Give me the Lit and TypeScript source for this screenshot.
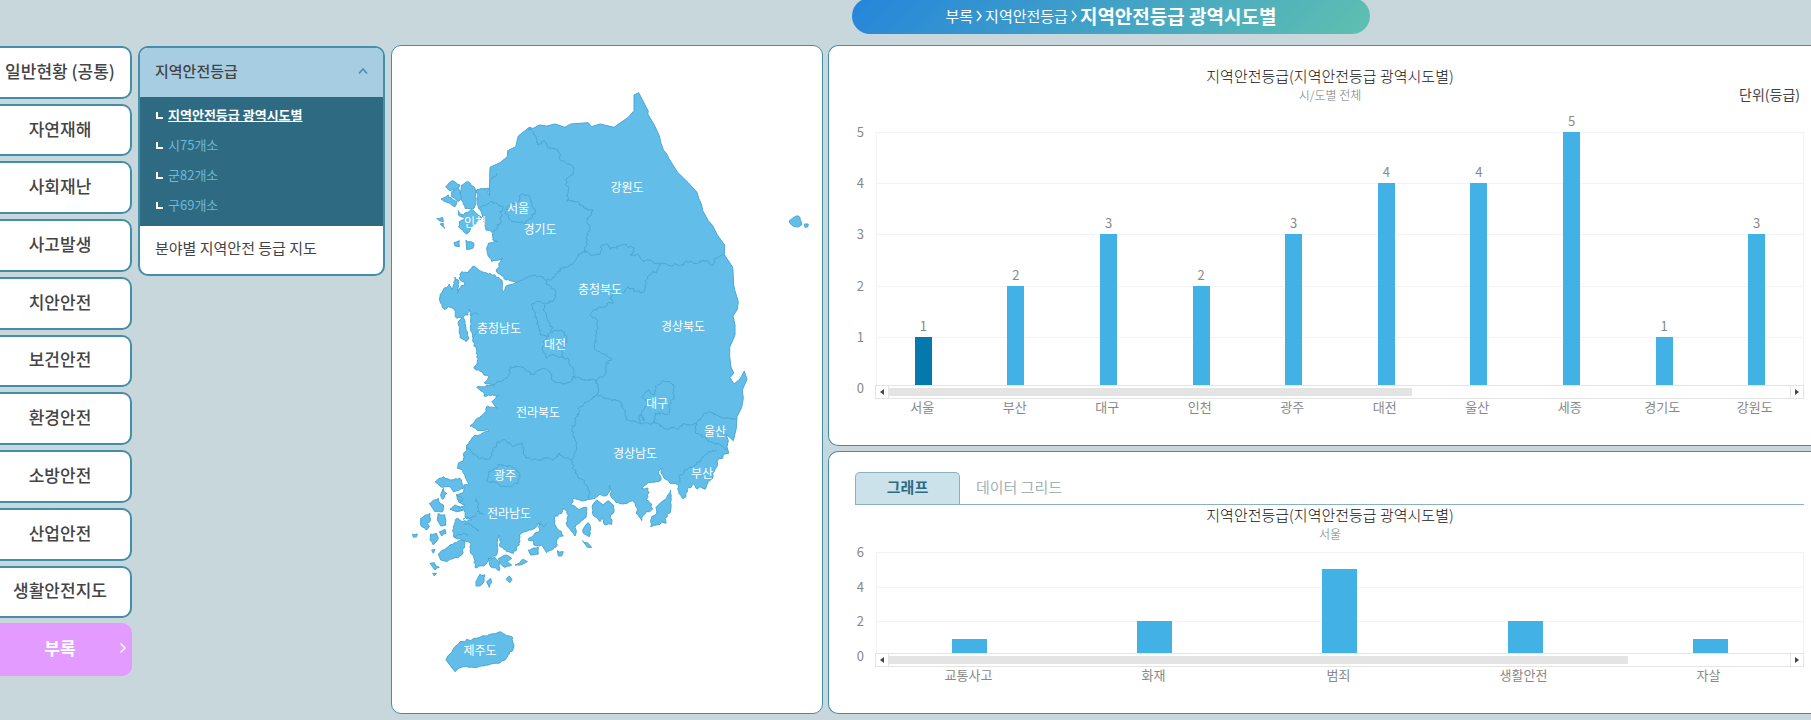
import { LitElement, html, svg, css } from "lit";
import { customElement, property, state } from "lit/decorators.js";
import { classMap } from "lit/directives/class-map.js";

type Datum = { name: string; value: number; active?: boolean };

const FONT = css`"Noto Sans CJK KR", "Noto Sans", sans-serif`;

/* Map tiles: each one holds outlines in thirds of a map unit, relative to its own origin. */
const TILE = {
  northWest: "translate(400 80) scale(0.33333)",
  northEast: "translate(560 80) scale(0.33333)",
  west: "translate(400 280) scale(0.33333)",
  east: "translate(560 280) scale(0.33333)",
  south: "translate(400 430) scale(0.33333)",
};

const parse = (s: string): number[][] => s.trim().split(/\s+/).map((p) => p.split(",").map(Number));

/* Breaks straight runs into short uneven steps, the same way on every render. */
function rough(s: string, step: number, amp: number): string {
  const pts = parse(s);
  const out: string[] = [];
  let seed = 7;
  const rnd = () => {
    seed = (seed * 16807) % 2147483647;
    return seed / 2147483647 - 0.5;
  };
  pts.forEach(([x, y], i) => {
    out.push(`${x},${y}`);
    const next = pts[i + 1];
    if (!next) return;
    const n = Math.floor(Math.hypot(next[0] - x, next[1] - y) / step);
    for (let k = 1; k < n; k++) {
      const px = x + ((next[0] - x) * k) / n + rnd() * amp;
      const py = y + ((next[1] - y) * k) / n + rnd() * amp;
      out.push(`${px.toFixed(1)},${py.toFixed(1)}`);
    }
  });
  return out.join(" ");
}

const EAST_COAST = `634,95 638.7,92.7 648.3,111.3 647.7,114 654.3,125 659.3,135.7 661,143.3 663.7,150.7 666,152.7 669,158.7
677.3,172 688.3,182.7 697,192.3 698.7,198.3 701.7,205 702.7,210.7 708.3,220.7 712.7,225.7 717.3,235 724.7,245 724.3,254.3
726.7,258.3 732.7,267.3 733.3,276.7 733.5,284 734.7,290 738.3,301.7 737.3,309.3 733,316 735,325 735,335 729.7,347.3
729.7,356.7 731,367.3 733.7,373 730,377.7 734,384 740,379 744.3,371 747,379.3 742.3,390 743.3,398.3 741.7,407.3 737,416.7
736.3,428.3 733.3,440.7 726,434 728.3,440.7 727,446.7 728.7,453.3 723.3,454.3 722.7,458.3 718.7,458.7`;

const SOUTH_WEST_COAST = `718.7,458.7 716.7,466.7 712.7,473.3 712.7,478.3 708.3,481.7 705,489.3 700,486.7 697.3,489 693.3,484
687.3,489.3 686,496.7 682.7,498.7 678.7,493.3 678.3,485 670,483.3 668,480 664,478 661,473 661.7,468.3 658.3,471.7 661,480
656.7,481.7 648.3,482.7 641.7,488.3 648,488 649,493 646,500 651.7,504 651.7,510 646,511.7 641.7,520.7 636,513.3 637.3,508.3
635,503.3 632.7,500.7 626,503.3 618.3,502.7 611.7,498 610,485 608.3,493.3 603.3,496 600,494 595,498.3 590,499.3 581.7,501
572.7,498.3 570.7,505 580,509.3 586.7,507.3 586,517.3 580,522.7 576,525 575,536 570.7,530 566.7,525 568.3,515 564,508
561.7,513.3 555,516 555,525 563.3,536 556.7,540 557.3,545 546.7,552.7 541.7,545 534,545 533.3,540 528,540 535,533 540,530
538,523 535,528.3 525,531.7 519.3,535 519.3,545 513.3,553.3 506.7,551.7 500,546.7 499.3,535 497.3,545 496.7,555 489.3,558.3
483.3,566 475,567.3 474,558.3 470.7,553.3 470.7,543.3 465,540.7 453.3,536.7 453.3,526.7 457.3,518.3 463,521.7 471.7,520
465,517.3 463.3,508.3 455,508 465,505 458.3,501.7 457,495 462.7,493 464,485 469.3,485 465,476.7 462.7,470 457.3,468.3
458.3,463.3 463.3,460.7 464,452.7 466.7,450.7 466.7,445 473.3,436.7 488.3,431.7 488.3,430 480,430.7 470,426 477.3,418.3
486,411.7 487.3,406 497.3,408.3 491.7,401.7 498.3,395 484,396 482.7,391.7 476.7,387.3 495,385 484,382.7 489.3,376.7
474,368.3 477.3,361.7 476.7,351.7 472.7,340 470.7,326 470.7,313.3 469,309 468,315 463.3,316.7 456.7,318.3 453.3,308.3
448.3,306.7 444,309.3 440.7,303.3 440,297 443.3,290 449.3,284 452,290 455,277 458.3,280 457.3,293.3 461,286 465,285
459,278 461.7,271.7 468.3,272.7 474,266 480,270.7 488.3,274 495,275 501.7,280 503.3,291.7 508.3,285 517.3,282.7 511,281
506,280 500,274 496,270 503,258 491.7,261.7 487.3,253.3 488.3,243.3 498,241.7 492.7,240 491.7,231.7 486,230 485,223
481.7,213 478.3,208 476.7,190 488.3,188 489.3,196`;

const NORTH_LINE = `489.3,196 490,167.3 500,162.7 507.3,156.7 507.7,150.7 515.7,146.7 518.3,136 529.3,127.3 533,128.5 539.3,125
546.7,126 555,124 565,127.3 570.7,124 588.3,122.7 591.7,126.7 600,124 614,127.3 628.3,117.3 634,110.7`;

const ISLANDS: [string, string[]][] = [
  [TILE.northWest, [
    "185,315 205,305 225,325 228,365 222,385 195,385 180,350",
    "137,320 158,302 180,315 170,330 148,332",
    "155,335 175,325 185,350 175,365 155,350",
    "123,357 135,352 145,345 160,360 170,365 165,380 150,370 135,365",
    "175,392 190,405 215,388 235,405 245,412 235,425 215,440 200,462 175,440 178,425 195,418 175,405",
    "110,415 128,412 130,425 118,422",
    "120,432 130,430 135,445",
    "162,487 178,482 178,500 165,498",
    "198,480 222,490 218,505 200,508",
  ]],
  [TILE.northEast, [
    "688,422 700,413 712,407 720,412 725,435 712,441 700,439 690,430",
    "733,432 745,432 743,441 735,442",
  ]],
  [TILE.west, ["185,115 175,125 178,150 180,172 198,185 207,175 198,150 195,130 190,112"]],
  [TILE.south, [
    "105,155 130,140 150,150 180,145 190,175 160,185 150,170 125,172",
    "130,175 140,190 128,208 122,195",
    "88,220 115,205 120,220 130,225 128,245 105,245",
    "115,250 135,255 138,285 122,288 112,270",
    "62,265 90,250 90,275 82,280 88,290 78,300 62,285",
    "92,312 110,310 115,325 100,345 90,330",
    "115,372 150,345 185,330 195,335 185,375 140,395 122,390",
    "38,312 52,312 50,320 40,322",
    "118,305 135,298 138,310 125,318",
    "170,192 188,205 185,215 172,208",
    "150,238 165,225 190,240 170,245",
    "95,360 105,358 100,370",
    "90,400 103,398 118,412 105,420",
    "98,430 110,430 103,438",
    "240,432 255,435 252,455 240,468 228,468 228,455",
    "260,455 272,445 275,458 268,472",
    "318,448 328,438 336,448 330,458",
    "265,385 285,382 298,400 298,422 270,408",
    "295,385 320,375 335,385 320,395 335,405 315,412 300,400",
    "345,405 360,398 370,388 382,395 360,405",
    "385,360 415,352 415,372 392,375",
    "472,362 490,365 485,378 475,378",
    "548,300 565,278 572,295 568,320 550,310",
    "548,332 562,338 575,352 562,352",
    "590,210 578,225 577,250 600,275 605,265 615,285 635,283 632,255 640,250 640,225 625,212 610,225",
    "785,215 800,205 812,180 812,240 795,265 798,280 785,276 770,285 752,290 755,260 770,250 768,232",
    "138,690 150,672 165,650 180,635 195,636 200,628 212,632 222,625 240,622 275,612 302,605 320,617 338,622 340,655 315,690 290,700 265,705 228,712 190,710 178,714 165,725",
  ]],
];

const BORDERS: [string, string[]][] = [
  [TILE.northWest, [
    "388,142 405,165 412,195 432,182 445,205 475,208 480,238 518,260 520,280 498,300 505,335 500,365 525,365 550,378 580,390 575,405 560,415 568,435 560,470 558,500 550,515",
    "550,515 535,525 515,555 480,565 465,590 440,602 415,588 395,588 375,595 352,605",
    "440,602 445,615 465,630 465,655 440,670 410,665",
    "325,375 355,365 360,345 385,345 395,375 405,390 395,415 370,430 335,425 315,400 325,375",
    "240,385 270,365 310,380 300,395 305,410 290,450 278,455",
    "272,300 285,290 290,280",
  ]],
  [TILE.northEast, [
    "75,510 90,525 120,522 125,495 140,490 150,508 190,495 225,505 210,525 235,525 245,540 295,548 335,560 345,550 365,555 380,542 415,550 430,540 460,557 465,535 492,523",
  ]],
  [TILE.west, [
    "410,65 395,75 405,105 415,140 420,165 445,170 455,150 440,110 430,90 435,75",
    "455,155 485,150 500,175 485,215 490,232 455,225 440,235 428,210 430,185 445,165",
    "285,312 325,290 330,260 370,262 392,285 430,265 450,275 455,300 490,315 525,290 515,260 505,235 490,230",
    "525,290 555,300 590,300",
    "200,500 215,515 235,535 265,538 290,490 315,480 340,500 365,488 372,525 395,540 430,535 460,540 480,520 515,540",
    "265,605 265,575 290,565 295,552 335,560 360,580 355,605 335,620 300,618 280,605 265,605",
    "210,105 222,100 236,103",
    "222,170 228,160 240,152",
  ]],
  [TILE.east, [
    "110,300 135,285 138,250 155,235 125,220 102,205 110,160 110,120 90,105 120,80 160,70 150,55 160,40 195,35 205,20 240,38 255,25 258,0 262,-10 290,-30 300,-52",
    "110,300 115,325 110,345 140,355 180,365 195,400 200,420 240,430 275,430 285,425 300,440 350,448 375,430 410,432",
    "110,345 60,380 45,425 35,455 50,490 45,515 35,540 45,580 70,600 85,630 88,655",
    "285,430 285,400 325,403 328,375 342,350 340,312 310,302 285,320 285,345 265,330 245,350 265,365 245,395 255,420 240,405 240,430",
    "410,432 430,402 455,397 490,415 530,417",
    "410,432 405,455 450,485 480,495 500,510",
    "470,510 445,515 410,550 385,565 360,585 360,608",
  ]],
  [TILE.south, [
    "230,205 235,225 232,245 250,255",
    "190,265 215,262 232,250",
    "195,280 215,285 235,305",
    "165,320 190,310 205,315",
    "420,275 430,290 440,280",
  ]],
];

const REGIONS: [string, number, number][] = [
  ["강원도", 627, 186], ["서울", 518, 207], ["경기도", 540, 228], ["인천", 475, 221],
  ["충청북도", 600, 288], ["충청남도", 499, 327], ["대전", 555, 343], ["경상북도", 683, 325],
  ["전라북도", 538, 411], ["대구", 657, 402], ["울산", 715, 430], ["경상남도", 635, 452],
  ["부산", 702, 472], ["광주", 505, 474], ["전라남도", 509, 512], ["제주도", 480, 649],
];

@customElement("korea-map")
export class KoreaMap extends LitElement {
  static styles = css`
    :host { display: flex; min-width: 0; }
    svg { flex: 1; width: 100%; min-width: 0; }
    .land { fill: #62bde9; stroke: #4ba7d3; stroke-width: 1; stroke-linejoin: round; vector-effect: non-scaling-stroke; }
    .border { fill: none; stroke: #4ba7d3; stroke-width: 1; stroke-linejoin: round; vector-effect: non-scaling-stroke; }
    .region { fill: #fff; font: 12px ${FONT}; text-anchor: middle; dominant-baseline: central; }
  `;

  render() {
    const mainland = [EAST_COAST, rough(SOUTH_WEST_COAST, 2, 2), NORTH_LINE].join(" ");
    return html`
      <svg viewBox="392 46 430 667" role="img" aria-label="지역안전등급 지도">
        <polygon class="land" points=${mainland}></polygon>
        ${ISLANDS.map(([tile, shapes]) => svg`<g transform=${tile}>
          ${shapes.map((s) => svg`<polygon class="land" points=${rough(s, 7, 6)}></polygon>`)}
        </g>`)}
        ${BORDERS.map(([tile, lines]) => svg`<g transform=${tile}>
          ${lines.map((l) => svg`<polyline class="border" points=${rough(l, 5, 9)}></polyline>`)}
        </g>`)}
        ${REGIONS.map(([name, x, y]) => svg`<text class="region" x=${x} y=${y}>${name}</text>`)}
      </svg>
    `;
  }
}

@customElement("bar-chart")
export class BarChart extends LitElement {
  @property() heading = "";
  @property() subheading = "";
  @property() unit = "";
  @property({ type: Number }) max = 5;
  @property({ type: Number }) step = 1;
  @property({ type: Number }) thumb = 50;
  @property({ type: Boolean }) compact = false;
  @property({ attribute: false }) data: Datum[] = [];

  static styles = css`
    :host { display: block; color: #888; font: 13px/18px ${FONT}; }
    .head { display: grid; grid-template-columns: 1fr auto 1fr; padding-left: 6px; padding-right: 4px; align-items: end; }
    .titles { grid-column: 2; text-align: center; }
    h2 { margin: 0; font-size: 15px; line-height: 20px; font-weight: 300; color: #111; }
    .sub { margin: 0; font-size: 12px; line-height: 18px; font-weight: 300; color: #777; }
    .unit { justify-self: end; font-size: 14px; line-height: 20px; color: #444; }
    .body { display: grid; grid-template-columns: 10px 1fr; column-gap: 12px; margin-top: 28px; }
    .compact .body { margin-top: 9px; }
    .axis { display: flex; flex-direction: column; justify-content: space-between; margin: -9px 0; text-align: right; }
    .plot { display: grid; height: 256px; box-sizing: border-box; border: solid #f2f2f2; border-width: 0 1px; }
    .compact .plot { height: 104px; }
    .lines, .bars { grid-area: 1 / 1; display: grid; }
    .lines { grid-auto-rows: 1fr; }
    .line { border-top: 1px solid #f2f2f2; }
    .bars, .names { grid-auto-flow: column; grid-auto-columns: 1fr; }
    .bars { align-items: end; justify-items: center; }
    .bar { width: 17px; background: #41b1e6; display: flex; justify-content: center; align-items: flex-start; }
    .bar.active { background: #0578ad; }
    .compact .bar { width: 35px; }
    .value { margin-top: -20px; }
    .scroll { grid-column: 2; position: relative; margin: -3px 0 0 -1px; height: 14px; box-sizing: border-box; display: flex; align-items: center; border: 1px solid #e4e4e4; background: #fff; }
    .track { flex: 1; height: 8px; }
    .thumb { height: 8px; background: #e4e4e4; }
    .arrow { align-self: stretch; width: 13px; box-sizing: border-box; padding: 0; border: 0 solid #e4e4e4; background: #fff; display: grid; place-items: center; }
    .arrow.prev { border-right-width: 1px; }
    .arrow.next { border-left-width: 1px; }
    .arrow svg { width: 4px; height: 6px; fill: #444; display: block; }
    .names { grid-column: 2; display: grid; text-align: center; margin: -1px 3px 0 0; }
  `;

  render() {
    const ticks: number[] = [];
    for (let t = this.max; t >= 0; t -= this.step) ticks.push(t);
    return html`
      <section class=${classMap({ chart: true, compact: this.compact })}>
        <div class="head">
          <div class="titles">
            <h2>${this.heading}</h2>
            <p class="sub">${this.subheading}</p>
          </div>
          ${this.unit ? html`<span class="unit">${this.unit}</span>` : ""}
        </div>
        <div class="body">
          <div class="axis">${ticks.map((t) => html`<span>${t}</span>`)}</div>
          <div class="plot">
            <div class="lines">${ticks.slice(1).map(() => html`<div class="line"></div>`)}</div>
            <div class="bars">
              ${this.data.map((d) => html`
                <div class=${classMap({ bar: true, active: !!d.active })} style="height:${(d.value / this.max) * 100}%">
                  ${this.compact ? "" : html`<span class="value">${d.value}</span>`}
                </div>`)}
            </div>
          </div>
          <div class="scroll">
            <button class="arrow prev" type="button" aria-label="이전"><svg viewBox="0 0 4 6"><path d="M4 0v6L0 3z"></path></svg></button>
            <div class="track"><div class="thumb" style="width:${this.thumb}%"></div></div>
            <button class="arrow next" type="button" aria-label="다음"><svg viewBox="0 0 4 6"><path d="M0 0v6l4-3z"></path></svg></button>
          </div>
          <div class="names">${this.data.map((d) => html`<span>${d.name}</span>`)}</div>
        </div>
      </section>
    `;
  }
}

const MENU = ["일반현황 (공통)", "자연재해", "사회재난", "사고발생", "치안안전", "보건안전", "환경안전", "소방안전", "산업안전", "생활안전지도", "부록"];
const SUBMENU = ["지역안전등급 광역시도별", "시75개소", "군82개소", "구69개소"];

const BY_REGION: Datum[] = [
  { name: "서울", value: 1, active: true }, { name: "부산", value: 2 }, { name: "대구", value: 3 },
  { name: "인천", value: 2 }, { name: "광주", value: 3 }, { name: "대전", value: 4 }, { name: "울산", value: 4 },
  { name: "세종", value: 5 }, { name: "경기도", value: 1 }, { name: "강원도", value: 3 },
];
const BY_FIELD: Datum[] = [
  { name: "교통사고", value: 1 }, { name: "화재", value: 2 }, { name: "범죄", value: 5 },
  { name: "생활안전", value: 2 }, { name: "자살", value: 1 },
];
const TITLE = "지역안전등급(지역안전등급 광역시도별)";

@customElement("app-root")
export class AppRoot extends LitElement {
  @state() private current = "부록";
  @state() private tab = 0;

  static styles = css`
    :host { display: flex; flex-direction: column; min-height: 100vh; box-sizing: border-box; overflow: hidden; background: #c8d7dc; color: #444; font: 15px/20px ${FONT}; }
    * { box-sizing: border-box; }
    button { font: inherit; color: inherit; cursor: pointer; }
    .page { flex: 1; display: grid; grid-template-columns: 132px 247px 432px minmax(0, 1fr); padding-bottom: 6px; grid-template-rows: auto 1fr; }
    .top { grid-column: 4; padding: 0 0 11px 41px; }
    .crumbs { width: 518px; height: 36px; margin-top: -2px; border-radius: 18px; background: linear-gradient(135deg, #2585db, #5fc0b0); color: #fff; display: flex; align-items: center; justify-content: center; gap: 3px; }
    .crumbs a { color: #fff; text-decoration: none; }
    .crumbs svg { width: 6px; height: 12px; fill: none; stroke: #fff; stroke-width: 1.5; }
    .crumbs strong { font-size: 19px; line-height: 24px; }
    .menu, .sub, .map, .charts { grid-row: 2; }
    .menu { grid-column: 1; display: grid; grid-auto-rows: 1fr; gap: 5px; padding: 1px 0 38px; }
    .item { border: 2px solid #438ea8; border-left: 0; border-radius: 0 10px 10px 0; background: #fff; padding: 0 10px 3px 0; font-size: 17px; font-weight: 500; display: grid; place-items: center; white-space: nowrap; }
    .item.on { border: 0; padding: 0 6px 3px 0; background: #e39bff; color: #fff; font-weight: 700; grid-template-columns: 1fr 6px; }
    .item.on svg { width: 6px; height: 10px; fill: none; stroke: #fff; stroke-width: 1.5; }
    .sub { grid-column: 2; margin: 1px 0 0 6px; width: 247px; align-self: start; border: 2px solid #438ea8; border-radius: 10px; background: #fff; overflow: hidden; }
    .fold { width: 100%; height: 49px; border: 0; padding: 0 15px 3px; background: #a6cde1; font-weight: 500; display: flex; align-items: center; justify-content: space-between; }
    .fold svg { width: 10px; height: 6px; fill: none; stroke: #438ea8; stroke-width: 1.5; }
    .links { margin: 0; padding: 3px 16px 6px; list-style: none; background: #2e6b83; font-size: 13px; line-height: 30px; }
    .links li { display: flex; align-items: center; gap: 5px; }
    .links li::before { content: ""; box-sizing: border-box; width: 7px; height: 7px; border: solid #fff; border-width: 0 0 2px 2px; }
    .links a { color: #6db8d6; text-decoration: none; }
    .links a.here { color: #fff; font-weight: 700; text-decoration: underline; }
    .leaf { display: block; padding: 12px 15px 16px; color: #444; text-decoration: none; }
    .map { grid-column: 3; margin-left: 12px; width: 432px; }
    .panel { border: 1px solid #438ea8; border-radius: 10px; background: #fff; }
    .charts { grid-column: 4; margin-left: 17px; display: flex; flex-direction: column; gap: 5px; }
    .charts .panel { border-right: 0; border-radius: 10px 0 0 10px; padding: 20px 7px 0 25px; }
    .charts .first { padding-bottom: 29px; }
    .charts .second { flex: 1; }
    .tabs { display: flex; margin-left: 1px; border-bottom: 1px solid #8ab1c0; }
    .tab { height: 32px; border: 0; padding: 0 0 3px 16px; background: none; color: #a5b0b6; }
    .tab.on { width: 105px; margin-bottom: -1px; padding: 0 0 3px; border: 1px solid #8ab1c0; border-bottom: 0; border-radius: 5px 5px 0 0; background: #cce2ea; color: #2e6b83; font-weight: 700; }
  `;

  render() {
    const tabs = ["그래프", "데이터 그리드"];
    return html`
      <main class="page">
        <header class="top">
          <nav class="crumbs" aria-label="현재 위치">
            <a href="#">부록</a>
            <svg viewBox="0 0 6 12"><path d="M1 1l4 5-4 5"></path></svg>
            <a href="#">지역안전등급</a>
            <svg viewBox="0 0 6 12"><path d="M1 1l4 5-4 5"></path></svg>
            <strong>지역안전등급 광역시도별</strong>
          </nav>
        </header>
        <nav class="menu" aria-label="주 메뉴">
          ${MENU.map((m) => html`
            <button type="button" class=${classMap({ item: true, on: m === this.current })} @click=${() => (this.current = m)}>
              <span>${m}</span>${m === this.current ? html`<svg viewBox="0 0 6 10"><path d="M.5 .5L5 5 .5 9.5"></path></svg>` : ""}
            </button>`)}
        </nav>
        <nav class="sub" aria-label="하위 메뉴">
          <button type="button" class="fold" aria-expanded="true">
            지역안전등급 <svg viewBox="0 0 10 6"><path d="M1 5.5l4-4.5 4 4.5"></path></svg>
          </button>
          <ul class="links">
            ${SUBMENU.map((s, i) => html`<li><a href="#" class=${classMap({ here: i === 0 })}>${s}</a></li>`)}
          </ul>
          <a class="leaf" href="#">분야별 지역안전 등급 지도</a>
        </nav>
        <korea-map class="map panel"></korea-map>
        <div class="charts">
          <section class="panel first">
            <bar-chart heading=${TITLE} subheading="시/도별 전체" unit="단위(등급)" max="5" step="1" thumb="58" .data=${BY_REGION}></bar-chart>
          </section>
          <section class="panel second">
            <div class="tabs" role="tablist">
              ${tabs.map((t, i) => html`
                <button type="button" role="tab" aria-selected=${i === this.tab} class=${classMap({ tab: true, on: i === this.tab })} @click=${() => (this.tab = i)}>${t}</button>`)}
            </div>
            <bar-chart compact heading=${TITLE} subheading="서울" max="6" step="2" thumb="82" .data=${BY_FIELD}></bar-chart>
          </section>
        </div>
      </main>
    `;
  }
}
